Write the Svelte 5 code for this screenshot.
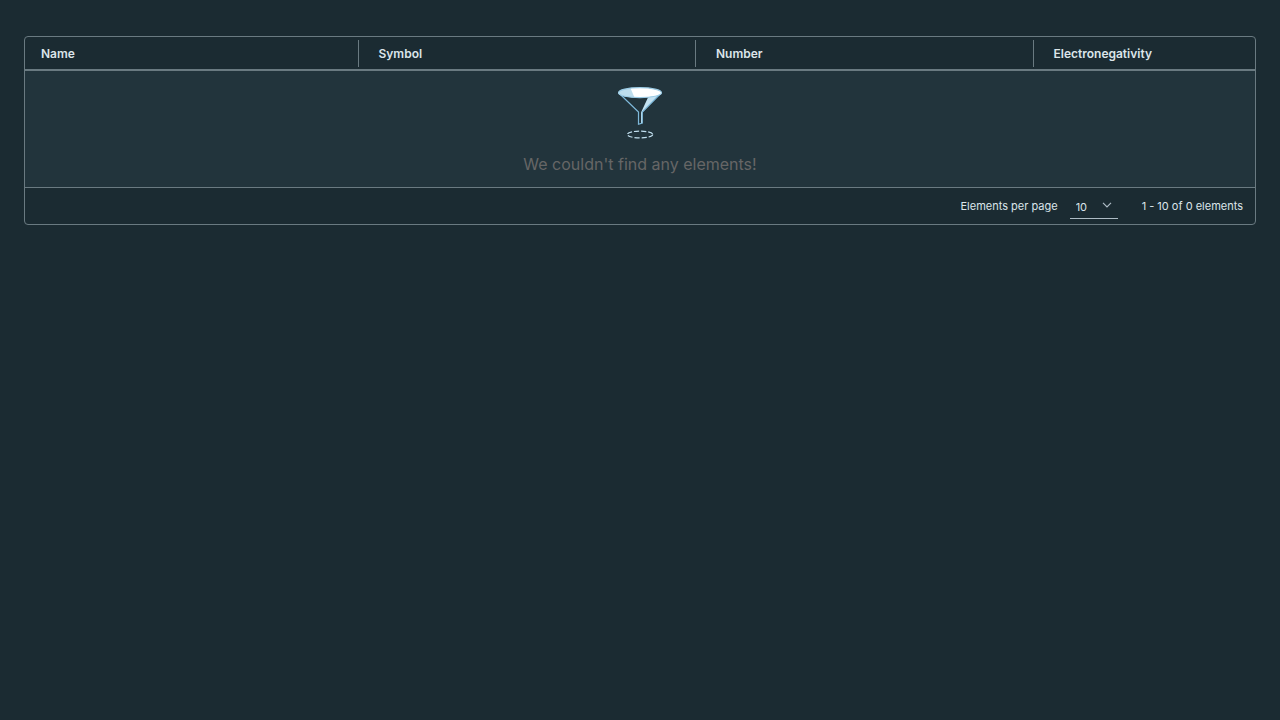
<script>
  const columns = ['Name', 'Symbol', 'Number', 'Electronegativity'];
  const sizes = [10, 20, 50, 100];
  let pageSize = $state(10);
</script>

<main>
  <section class="datagrid" aria-label="Elements">
    <table>
      <thead>
        <tr>
          {#each columns as column}
            <th scope="col"><span class="title">{column}</span></th>
          {/each}
        </tr>
      </thead>
      <tbody>
        <tr>
          <td colspan={columns.length}>
            <div class="placeholder">
              <svg width="60" height="60" viewBox="0 0 60 60" aria-hidden="true">
                <path d="M9 12 28.5 31V43.2L32.3 42V31L51 12Z" fill="#22343c" />
                <path d="M38 16.5 51 12 32.3 31.5V42H31V31.5Z" fill="#c3e1f1" />
                <path d="M8.8 12 28.5 31V43.2L32.3 42V31L51.2 12" fill="none" stroke="#7fb9da" stroke-width="1.2" />
                <ellipse cx="30" cy="11.7" rx="21.5" ry="5" fill="#fff" />
                <path d="M20.5 7.2 24.5 16.5C15 15.9 8.5 14.1 8.5 11.7 8.5 9.4 13.5 7.8 20.5 7.2Z" fill="#bddded" />
                <ellipse cx="30" cy="11.7" rx="21.5" ry="5" fill="none" stroke="#9bcbe5" stroke-width="1.2" />
                <ellipse cx="30" cy="53.5" rx="12.7" ry="3.4" fill="none" stroke="#c1dfef" stroke-width="1.2" stroke-dasharray="5 2" />
              </svg>
              <p>We couldn't find any elements!</p>
            </div>
          </td>
        </tr>
      </tbody>
    </table>
    <footer>
      <label for="page-size">Elements per page</label>
      <div class="select">
        <select id="page-size" bind:value={pageSize}>
          {#each sizes as size}
            <option value={size}>{size}</option>
          {/each}
        </select>
        <svg width="10" height="6" viewBox="0 0 10 6" aria-hidden="true">
          <path d="M1 .8 5 4.8 9 .8" fill="none" stroke="#adbbc4" stroke-width="1.2" />
        </svg>
      </div>
      <span class="range">1 - {pageSize} of 0 elements</span>
    </footer>
  </section>
</main>

<style>
  :global(body) {
    background: #1b2b32;
    margin: 0;
  }
  main {
    padding: 36px 24px;
    font-family: Inter, "Open Sans", sans-serif;
    font-size: 11px;
    line-height: 16px;
    color: #dce5ea;
  }
  .datagrid {
    border: 1px solid #6a7a81;
    border-radius: 4px;
    overflow: hidden;
  }
  table {
    width: 100%;
    table-layout: fixed;
    border-collapse: separate;
    border-spacing: 0;
  }
  th {
    box-sizing: border-box;
    width: 27.44%;
    padding: 3px 4px 2px 0;
    border-bottom: 2px solid #6a7a81;
    text-align: left;
    font-size: 12px;
    font-weight: 600;
  }
  th:last-child {
    width: auto;
  }
  .title {
    display: block;
    padding-left: 16px;
    line-height: 27px;
    border-right: 1px solid #6a7a81;
  }
  th:last-child .title {
    border-right: 0;
  }
  td {
    padding: 0;
    background: #22343c;
    border-bottom: 1px solid #6a7a81;
  }
  .placeholder {
    display: flex;
    flex-direction: column;
    align-items: center;
    padding: 10px 12px 11px;
  }
  .placeholder p {
    margin: 11px 0 0;
    font-size: 16px;
    line-height: 24px;
    font-weight: 400;
    color: #666;
  }
  footer {
    display: flex;
    align-items: center;
    justify-content: flex-end;
    height: 36px;
    padding: 0 12px;
  }
  .select {
    position: relative;
    width: 48px;
    margin: 0 24px 0 12px;
  }
  select {
    display: block;
    appearance: none;
    box-sizing: border-box;
    width: 100%;
    height: 26px;
    padding: 3px 20px 0 6px;
    border: 0;
    border-bottom: 1px solid #adbbc4;
    border-radius: 0;
    background: none;
    color: inherit;
    font: inherit;
  }
  option {
    background: #22343c;
  }
  .select svg {
    position: absolute;
    right: 6px;
    top: 9px;
    pointer-events: none;
  }
</style>
